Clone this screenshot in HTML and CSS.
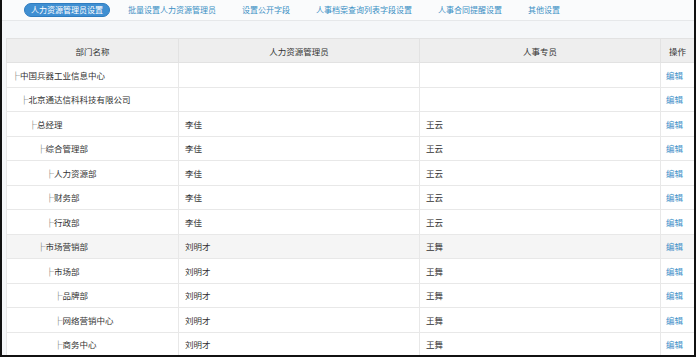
FILE: index.html
```html
<!DOCTYPE html>
<html lang="zh-CN">
<head>
  <meta charset="UTF-8">
  <title>人力资源管理员设置</title>
  <link rel="stylesheet" href="styles.css">
</head>
<body>

<div class="frame">
  <div class="tabs">
    <a class="tab active" href="#">人力资源管理员设置</a>
    <a class="tab" href="#">批量设置人力资源管理员</a>
    <a class="tab" href="#">设置公开字段</a>
    <a class="tab" href="#">人事档案查询列表字段设置</a>
    <a class="tab" href="#">人事合同提醒设置</a>
    <a class="tab" href="#">其他设置</a>
  </div>

  <div class="content">
    <table class="dept-table">
      <thead>
        <tr>
          <th class="col-dept">部门名称</th>
          <th class="col-hr">人力资源管理员</th>
          <th class="col-staff">人事专员</th>
          <th class="col-op">操作</th>
        </tr>
      </thead>
      <tbody>
        <tr>
          <td class="lv0">├中国兵器工业信息中心</td>
          <td></td>
          <td></td>
          <td><a href="#">编辑</a></td>
        </tr>
        <tr>
          <td class="lv1">├北京通达信科科技有限公司</td>
          <td></td>
          <td></td>
          <td><a href="#">编辑</a></td>
        </tr>
        <tr>
          <td class="lv2">├总经理</td>
          <td>李佳</td>
          <td>王云</td>
          <td><a href="#">编辑</a></td>
        </tr>
        <tr>
          <td class="lv3">├综合管理部</td>
          <td>李佳</td>
          <td>王云</td>
          <td><a href="#">编辑</a></td>
        </tr>
        <tr>
          <td class="lv4">├人力资源部</td>
          <td>李佳</td>
          <td>王云</td>
          <td><a href="#">编辑</a></td>
        </tr>
        <tr>
          <td class="lv4">├财务部</td>
          <td>李佳</td>
          <td>王云</td>
          <td><a href="#">编辑</a></td>
        </tr>
        <tr>
          <td class="lv4">├行政部</td>
          <td>李佳</td>
          <td>王云</td>
          <td><a href="#">编辑</a></td>
        </tr>
        <tr class="hover">
          <td class="lv3">├市场营销部</td>
          <td>刘明才</td>
          <td>王舞</td>
          <td><a href="#">编辑</a></td>
        </tr>
        <tr>
          <td class="lv4">├市场部</td>
          <td>刘明才</td>
          <td>王舞</td>
          <td><a href="#">编辑</a></td>
        </tr>
        <tr>
          <td class="lv5">├品牌部</td>
          <td>刘明才</td>
          <td>王舞</td>
          <td><a href="#">编辑</a></td>
        </tr>
        <tr>
          <td class="lv5">├网络营销中心</td>
          <td>刘明才</td>
          <td>王舞</td>
          <td><a href="#">编辑</a></td>
        </tr>
        <tr>
          <td class="lv5">├商务中心</td>
          <td>刘明才</td>
          <td>王舞</td>
          <td><a href="#">编辑</a></td>
        </tr>
      </tbody>
    </table>
  </div>
</div>

</body>
</html>
```

FILE: styles.css
```css
body {
  margin: 0;
  font-family: "Noto Sans CJK SC", "Liberation Sans", sans-serif;
  color: #333;
  background-color: #fff;
}

.frame {
  width: 696px;
  height: 357px;
  box-sizing: border-box;
  border-left: 2px solid #111;
  border-right: 2px solid #111;
  border-bottom: 2px solid #111;
  background-color: #f5f7f9;
  overflow: hidden;
}

.tabs {
  display: flex;
  align-items: center;
  gap: 14px;
  height: 20px;
  padding-left: 22px;
  background-color: #fafbfc;
  border-bottom: 1px solid #e6e8ea;
}

.tab {
  font-size: 8px;
  line-height: 12px;
  padding: 0 6px;
  color: #3a8fc4;
  text-decoration: none;
}

.tab.active {
  background-color: #3f8fd2;
  border: 1px solid #2f7cbf;
  border-radius: 7px;
  padding: 0 6px;
  margin-right: -2px;
  color: #fff;
}

.content {
  padding: 17px 4px 0 4px;
}

.dept-table {
  width: 684px;
  border-collapse: collapse;
  table-layout: fixed;
  font-size: 8.5px;
  background-color: #fff;
}

.dept-table th {
  height: 23px;
  background-color: #eeeeee;
  font-weight: normal;
  text-align: center;
  border: 1px solid #e2e2e2;
  padding: 0;
}

.dept-table td {
  height: 23.5px;
  padding: 0 6px;
  border: 1px solid #e8e8e8;
  white-space: nowrap;
}

.col-dept { width: 171px; }
.col-hr { width: 240px; }
.col-staff { width: 240px; }
.col-op { width: 33px; }

.dept-table td:last-child {
  padding: 0 5px;
}

.dept-table a {
  color: #3d8fc8;
  text-decoration: none;
}

.dept-table tr.hover td {
  background-color: #f5f5f5;
}

.dept-table td.lv0 { padding-left: 4.5px; }
.dept-table td.lv1 { padding-left: 13px; }
.dept-table td.lv2 { padding-left: 21.5px; }
.dept-table td.lv3 { padding-left: 30px; }
.dept-table td.lv4 { padding-left: 38.5px; }
.dept-table td.lv5 { padding-left: 47px; }
```
